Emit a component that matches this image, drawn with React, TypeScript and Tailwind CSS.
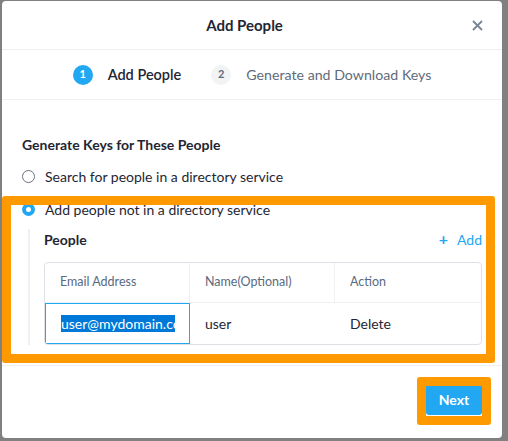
import React from 'react';

const font = { fontFamily: 'Lato, "Open Sans", sans-serif' };

export default function App() {
  return (
    <div className="relative h-[441px] w-[508px] overflow-hidden bg-[#808080] pl-[2px] pt-[1px]" style={font}>
      <div className="flex h-[437px] w-[500px] flex-col rounded-[4px] bg-white text-[#1f2633]">
        {/* header */}
        <div className="flex h-[49px] items-center gap-[9px] border-b border-[#eef0f2] pl-[24px] pr-[19px]">
          <div className="flex-1 text-center text-[15px] font-bold">Add People</div>
          <button className="flex h-[16px] w-[11px] items-center justify-center text-[#7a8594]">
            <svg width="11" height="11" viewBox="0 0 11 11" fill="none" stroke="currentColor" strokeWidth="1.8">
              <path d="M1 1l9 9M10 1l-9 9" />
            </svg>
          </button>
        </div>

        {/* steps */}
        <div className="flex h-[50px] items-center justify-center border-b border-[#eef0f2]">
          <div className="flex h-[20px] w-[20px] items-center justify-center rounded-full bg-[#22a7f2] text-[11px] font-bold text-white">1</div>
          <div className="ml-[15px] text-[14.5px] font-semibold text-[#1f2633]">Add People</div>
          <div className="ml-[30px] flex h-[20px] w-[20px] items-center justify-center rounded-full bg-[#f1f3f5] text-[11px] font-bold text-[#5f6b7a]">2</div>
          <div className="ml-[15px] text-[14.2px] text-[#5f6b7a]">Generate and Download Keys</div>
        </div>

        {/* body */}
        <div className="flex flex-col px-[20px] pb-[20px] pt-[35px] text-[14px]">
          <div className="h-[20px] font-bold leading-[20px]">Generate Keys for These People</div>
          <label className="mt-[11px] flex h-[20px] items-center gap-[10px]">
            <span className="h-[13px] w-[13px] rounded-full border border-[#6b7280] bg-white" />
            <span>Search for people in a directory service</span>
          </label>
          <label className="mt-[13px] flex h-[20px] items-center gap-[10px]">
            <span className="flex h-[13px] w-[13px] items-center justify-center rounded-full bg-[#22a7f2]">
              <span className="h-[5px] w-[5px] rounded-full bg-white" />
            </span>
            <span>Add people not in a directory service</span>
          </label>

          <div className="ml-[6px] mt-[10px] border-l-2 border-[#eef0f2] pl-[14px]">
            <div className="flex h-[20px] items-center justify-between">
              <span className="font-bold">People</span>
              <span className="flex items-center gap-[9px] text-[#22a7f2]">
                <span className="text-[16px] font-bold">+</span>
                <span>Add</span>
              </span>
            </div>
            <div className="mt-[13px] overflow-hidden rounded-[4px] border border-[#dde1e6]">
              <div className="grid h-[40px] grid-cols-[145px_145px_1fr] items-stretch border-b border-[#eef0f2] text-[12.5px] text-[#5a6a80]">
                <div className="flex items-center border-r border-[#eef0f2] pl-[15px]">Email Address</div>
                <div className="flex items-center border-r border-[#eef0f2] pl-[15px]">Name(Optional)</div>
                <div className="flex items-center pl-[15px]">Action</div>
              </div>
              <div className="grid h-[41px] grid-cols-[145px_145px_1fr] items-stretch">
                <div className="flex items-center overflow-hidden whitespace-nowrap border border-[#22a7f2] pl-[15px] pr-[14px]">
                  <div className="overflow-hidden">
                    <span className="bg-[#0078d7] text-white">user@mydomain.com</span>
                  </div>
                </div>
                <div className="flex items-center pl-[15px]">user</div>
                <div className="flex items-center pl-[15px]">Delete</div>
              </div>
            </div>
          </div>
        </div>

        {/* footer */}
        <div className="flex flex-1 justify-end border-t border-[#eef0f2] pr-[20px] pt-[17px]">
          <button className="h-[32px] w-[56px] rounded-[3px] bg-[#22a7f2] text-[14px] font-bold text-white">Next</button>
        </div>
      </div>

      {/* highlight annotations */}
      <div className="pointer-events-none absolute left-[2px] top-[196px] h-[167px] w-[493px] rounded-[3px] border-[9px] border-[#ff9900]" />
      <div className="pointer-events-none absolute left-[417px] top-[377px] h-[48px] w-[74px] rounded-[3px] border-[9px] border-[#ff9900]" />
    </div>
  );
}
